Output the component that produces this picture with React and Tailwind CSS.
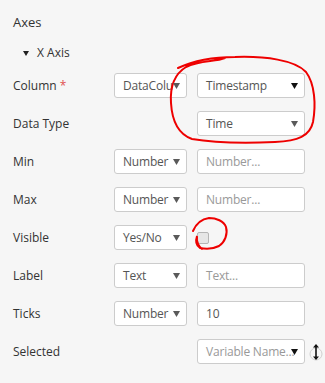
import React from "react";

const font = { fontFamily: '"Open Sans", "Noto Sans", sans-serif' };

function Arrow({ dark }) {
  return (
    <svg width="7" height="6" viewBox="0 0 7 6" className="absolute right-[6px] top-[9px] z-10">
      <path d="M0 0 L7 0 L3.5 6 Z" fill={dark ? "#111111" : "#5a5a5a"} />
    </svg>
  );
}

function Select({ text, w, placeholder, dark }) {
  return (
    <div className={`relative ${w} h-[25px] flex items-center bg-white border border-[#cccccc] rounded-[3px] pl-[8px] overflow-hidden`}>
      <span
        className={`text-[12px] tracking-[-0.2px] whitespace-nowrap ${placeholder ? "text-[#999999]" : "text-[#555555]"}`}
      >
        {text}
      </span>
      <Arrow dark={dark} />
    </div>
  );
}

function Input({ text, placeholder }) {
  return (
    <div className="w-[108px] h-[25px] flex items-center bg-white border border-[#cccccc] rounded-[3px] pl-[8px]">
      <span className={`text-[12px] tracking-[-0.2px] whitespace-nowrap ${placeholder ? "text-[#999999]" : "text-[#555555]"}`}>{text}</span>
    </div>
  );
}

function Row({ label, required, children }) {
  return (
    <div className="flex items-center h-[25px]">
      <div className="w-[101px] text-[12px] text-[#333333]">
        {label}
        {required && <span className="text-[#e05050] ml-[3px]">*</span>}
      </div>
      <div className="flex items-center gap-[10px]">{children}</div>
    </div>
  );
}

export default function App() {
  return (
    <div className="relative w-[325px] h-[383px] bg-[#f6f6f6] overflow-hidden" style={font}>
      <div className="pl-[13px] pt-[13px]">
        <div className="text-[13px] text-[#333333] leading-[18px]">Axes</div>
        <div className="flex items-center mt-[13px] ml-[10px] h-[18px] text-[12px] text-[#333333]">
          <svg width="6" height="5" viewBox="0 0 6 5" className="mr-[8px]">
            <path d="M0 0 L6 0 L3 5 Z" fill="#222" />
          </svg>
          <span>X Axis</span>
        </div>
        <div className="flex flex-col gap-[13px] mt-[11px]">
          <Row label="Column" required>
            <Select text="DataColu" w="w-[73px]" />
            <Select text="Timestamp" w="w-[108px]" dark />
          </Row>
          <Row label="Data Type">
            <div className="w-[73px]" />
            <Select text="Time" w="w-[108px]" />
          </Row>
          <Row label="Min">
            <Select text="Number" w="w-[73px]" />
            <Input text="Number..." placeholder />
          </Row>
          <Row label="Max">
            <Select text="Number" w="w-[73px]" />
            <Input text="Number..." placeholder />
          </Row>
          <Row label="Visible">
            <Select text="Yes/No" w="w-[73px]" />
            <div className="w-[12px] h-[12px] border border-[#b5b5b5] rounded-[2px] bg-[#e6e6e6]" />
          </Row>
          <Row label="Label">
            <Select text="Text" w="w-[73px]" />
            <Input text="Text..." placeholder />
          </Row>
          <Row label="Ticks">
            <Select text="Number" w="w-[73px]" />
            <Input text="10" />
          </Row>
          <Row label="Selected">
            <div className="w-[73px]" />
            <div className="flex items-center">
              <Select text="Variable Name..." w="w-[108px]" placeholder dark />
              <svg width="16" height="18" viewBox="0 0 16 18" className="ml-[3px]">
                <circle cx="8" cy="11" r="6" fill="none" stroke="#d0d0d0" strokeWidth="1" />
                <line x1="8" y1="2" x2="8" y2="16" stroke="#111" strokeWidth="1.6" />
                <path d="M5 4.5 L8 1 L11 4.5 Z" fill="#111" />
                <path d="M5 13.5 L8 17 L11 13.5 Z" fill="#111" />
              </svg>
            </div>
          </Row>
        </div>
      </div>
      <svg className="absolute inset-0 pointer-events-none" width="325" height="383" viewBox="0 0 325 383">
        <path
          d="M178 68 C195 60 215 57 235 57 C265 56 295 60 306 72 C315 84 316 105 313 122 C310 136 298 141 275 142 C250 143 215 143 192 139 C178 134 172 120 171 103 C170 88 173 75 186 67 C200 60 215 62 225 58"
          fill="none"
          stroke="#ee0000"
          strokeWidth="2"
          strokeLinecap="round"
        />
        <path
          d="M193 231 C196 224 202 219 209 218 C216 218 224 221 226 227 C228 234 225 242 219 246 C213 249 205 249 200 248 C197 246 195 242 197 236 C196 242 199 247 202 249"
          fill="none"
          stroke="#ee0000"
          strokeWidth="2"
          strokeLinecap="round"
        />
      </svg>
    </div>
  );
}
